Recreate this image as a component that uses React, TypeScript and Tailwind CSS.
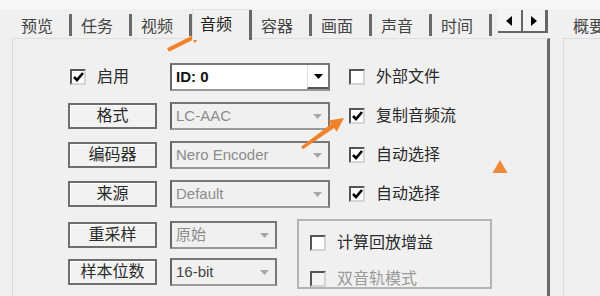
import React from "react";

type BoxProps = { checked?: boolean; disabled?: boolean };

function CheckBox({ checked, disabled }: BoxProps) {
  return (
    <span
      className={`flex h-[16px] w-[16px] shrink-0 items-center justify-center border-2 border-l-[#555] border-t-[#555] border-r-[#d4d4d4] border-b-[#d4d4d4] ${
        disabled ? "bg-[#f3f3f3]" : "bg-white"
      }`}
    >
      {checked && (
        <svg width="11" height="10" viewBox="0 0 11 10">
          <path d="M1 5 L4 8 L10 1" fill="none" stroke="#000" strokeWidth="2.6" />
        </svg>
      )}
    </span>
  );
}

function Caret({ dark }: { dark?: boolean }) {
  return (
    <svg width="9" height="5" viewBox="0 0 9 5">
      <path d="M0 0 H9 L4.5 5 Z" fill={dark ? "#000" : "#a8a8a8"} />
    </svg>
  );
}

function Button({ label }: { label: string }) {
  return (
    <div className="flex h-[26px] w-[89px] shrink-0 items-center justify-center border-2 border-[#6e6e6e] bg-[#f2f2f2] text-[16px] text-[#2a2a2a] shadow-[inset_1px_1px_0_#fff]">
      {label}
    </div>
  );
}

function Combo({ text, width, enabled, dim }: { text: string; width: string; enabled?: boolean; dim?: boolean }) {
  return (
    <div
      className={`flex h-[28px] shrink-0 items-center border-2 border-l-[#666] border-t-[#777] border-r-[#777] border-b-[#999] pl-[4px] ${width} ${
        enabled ? "bg-white" : "bg-[#f0f0f0]"
      }`}
    >
      <span
        className={`flex-1 text-[15px] ${
          enabled ? "font-bold text-[#111]" : dim ? "text-[#444]" : "text-[#8c8c8c]"
        }`}
      >
        {text}
      </span>
      <span
        className={`flex h-full w-[21px] items-center justify-center ${
          enabled ? "border-b-2 border-l border-b-[#555] border-l-[#e0e0e0]" : ""
        }`}
      >
        <Caret dark={enabled} />
      </span>
    </div>
  );
}

function SideCheck({ label, checked, disabled }: { label: string; checked?: boolean; disabled?: boolean }) {
  return (
    <div className="flex items-center gap-[11px]">
      <CheckBox checked={checked} disabled={disabled} />
      <span className={`text-[16px] ${disabled ? "text-[#9a9a9a]" : "text-[#2a2a2a]"}`}>{label}</span>
    </div>
  );
}

const tabs = ["预览", "任务", "视频", "音频", "容器", "画面", "声音", "时间"];

export default function App() {
  return (
    <div className="relative flex h-[296px] w-[600px] flex-col overflow-hidden bg-[#f0f0f0] font-['Liberation_Sans','Noto_Sans_CJK_SC',sans-serif]">
      <div className="h-[9px] shrink-0 bg-[#f7f7f7]" />
      <div className="flex flex-1">
        {/* left tab control */}
        <div className="flex w-[550px] shrink-0 flex-col">
          <div className="relative z-10 flex h-[29px] items-end pl-[12px]">
            {tabs.map((t) =>
              t === "音频" ? (
                <div
                  key={t}
                  className="mb-[-2px] flex h-[31px] w-[60px] items-center justify-between border-l border-t border-[#e2e2e2] bg-[#f0f0f0] pl-[7px]"
                >
                  <span className="mb-[1px] text-[16px] text-[#222]">{t}</span>
                  <span className="h-full w-[3px] bg-[#666]" />
                </div>
              ) : (
                <div key={t} className="flex h-[26px] w-[60px] items-center justify-between pl-[9px]">
                  <span className="pt-[3px] text-[16px] text-[#444]">{t}</span>
                  <span className="h-[22px] w-[3px] bg-[#6a6a6a]" />
                </div>
              )
            )}
            <div className="mb-[5px] ml-[6px] flex h-[23px] w-[50px] self-end">
              <div className="flex flex-1 items-center justify-center border-b-2 border-r-2 border-[#666] bg-[#f4f4f4]">
                <svg width="6" height="10" viewBox="0 0 6 10">
                  <path d="M6 0 V10 L0 5 Z" fill="#000" />
                </svg>
              </div>
              <div className="flex flex-1 items-center justify-center border-b-2 border-r-[3px] border-[#666] bg-[#f4f4f4]">
                <svg width="6" height="10" viewBox="0 0 6 10">
                  <path d="M0 0 V10 L6 5 Z" fill="#000" />
                </svg>
              </div>
            </div>
          </div>
          <div className="ml-[12px] flex flex-1 flex-col border-l border-t border-r-[3px] border-l-[#d8d8d8] border-t-[#dedede] border-r-[#6a6a6a] pl-[55px] pt-[24px]">
            <div className="flex flex-col gap-[11px]">
              <div className="flex h-[28px] items-center">
                <div className="flex w-[89px] items-center gap-[11px] pl-[2px]">
                  <CheckBox checked />
                  <span className="text-[16px] text-[#2a2a2a]">启用</span>
                </div>
                <div className="ml-[13px]">
                  <Combo text="ID: 0" width="w-[160px]" enabled />
                </div>
                <div className="ml-[19px]">
                  <SideCheck label="外部文件" />
                </div>
              </div>
              <div className="flex h-[28px] items-center">
                <Button label="格式" />
                <div className="ml-[13px]">
                  <Combo text="LC-AAC" width="w-[160px]" />
                </div>
                <div className="ml-[19px]">
                  <SideCheck label="复制音频流" checked />
                </div>
              </div>
              <div className="flex h-[28px] items-center">
                <Button label="编码器" />
                <div className="ml-[13px]">
                  <Combo text="Nero Encoder" width="w-[160px]" />
                </div>
                <div className="ml-[19px]">
                  <SideCheck label="自动选择" checked />
                </div>
              </div>
              <div className="flex h-[28px] items-center">
                <Button label="来源" />
                <div className="ml-[13px]">
                  <Combo text="Default" width="w-[160px]" />
                </div>
                <div className="ml-[19px]">
                  <SideCheck label="自动选择" checked />
                </div>
              </div>
            </div>
            <div className="mt-[11px] flex">
              <div className="flex flex-col gap-[9px] pt-[2px]">
                <div className="flex h-[28px] items-center">
                  <Button label="重采样" />
                  <div className="ml-[13px]">
                    <Combo text="原始" width="w-[107px]" />
                  </div>
                </div>
                <div className="flex h-[28px] items-center">
                  <Button label="样本位数" />
                  <div className="ml-[13px]">
                    <Combo text="16-bit" width="w-[107px]" dim />
                  </div>
                </div>
              </div>
              <div className="ml-[20px] flex h-[70px] w-[195px] flex-col gap-[12px] border-2 border-[#b4b4b4] pl-[11px] pt-[10px]">
                <SideCheck label="计算回放增益" />
                <SideCheck label="双音轨模式" disabled />
              </div>
            </div>
          </div>
        </div>
        {/* right panel */}
        <div className="flex flex-1 flex-col pl-[13px]">
          <div className="flex h-[29px] items-end">
            <div className="flex h-[26px] items-center pl-[10px] pt-[3px] text-[16px] text-[#444] whitespace-nowrap">概要</div>
          </div>
          <div className="flex-1 border-l border-t border-[#dcdcdc]" />
        </div>
      </div>

      {/* annotations */}
      <svg className="pointer-events-none absolute left-0 top-0" width="600" height="296" viewBox="0 0 600 296">
        <polygon
          points="167.1,48.2 191.3,36.1 189.5,32.5 202,33 194.9,43.3 193.1,39.7 168.9,51.8"
          fill="#f0832a"
        />
        <polygon
          points="301.1,146.8 331.1,124.1 328.5,120.4 344,118 336.7,131.8 334.1,128.1 302.9,149.2"
          fill="#f0832a"
        />
        <polygon points="500,160 507.5,173 492.5,173" fill="#f0883a" />
      </svg>
    </div>
  );
}
